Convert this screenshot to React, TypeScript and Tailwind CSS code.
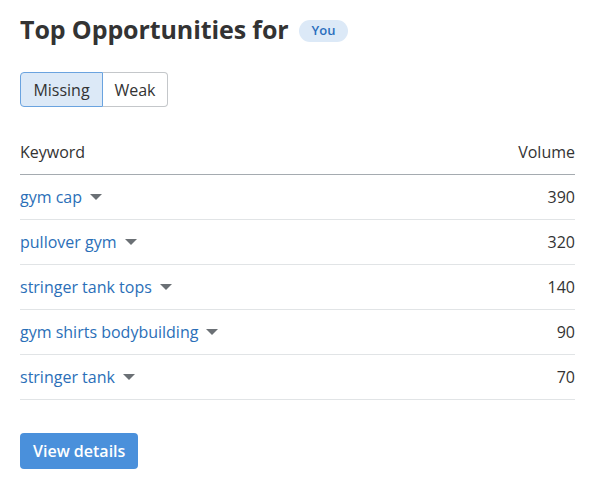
import React from 'react';

const ROWS = [
  { keyword: 'gym cap', volume: 390 },
  { keyword: 'pullover gym', volume: 320 },
  { keyword: 'stringer tank tops', volume: 140 },
  { keyword: 'gym shirts bodybuilding', volume: 90 },
  { keyword: 'stringer tank', volume: 70 },
];

const Caret = () => (
  <svg width="12" height="7" viewBox="0 0 12 7" className="ml-2 shrink-0">
    <path d="M0 0 L12 0 L6 6 Z" fill="#6b7075" />
  </svg>
);

export default function App() {
  return (
    <div
      className="w-[598px] h-[482px] bg-white px-5 pt-[14px] text-[#333]"
      style={{ fontFamily: '"Open Sans", "Noto Sans", sans-serif' }}
    >
      <div className="flex items-center h-[32px]">
        <h1 className="text-[25px] font-bold tracking-[-0.1px] text-[#333]">Top Opportunities for</h1>
        <span className="ml-[10px] mt-[2px] h-[22px] px-[13px] rounded-full bg-[#dce9f7] text-[#2a6ebd] text-[13px] font-semibold flex items-center">
          You
        </span>
      </div>

      <div className="flex mt-[26px] h-[35px] text-[16px]">
        <button className="rounded-l-[4px] border border-[#6aa3df] bg-[#dce9f7] text-[#333] w-[83px]">
          Missing
        </button>
        <button className="rounded-r-[4px] border border-l-0 border-[#c4c7ca] bg-white text-[#333] w-[65px]">
          Weak
        </button>
      </div>

      <div className="mt-[22px] w-[555px]">
        <div className="flex justify-between items-center h-[46px] border-b border-[#a5abb0] text-[16px] text-[#333]">
          <span>Keyword</span>
          <span>Volume</span>
        </div>
        {ROWS.map((row) => (
          <div
            key={row.keyword}
            className="flex justify-between items-center h-[45px] border-b border-[#e1e4e6] text-[16px]"
          >
            <span className="flex items-center text-[#2b6fb8]">
              {row.keyword}
              <Caret />
            </span>
            <span className="text-[#333]">{row.volume}</span>
          </div>
        ))}
      </div>

      <button className="mt-[33px] h-[36px] px-[13px] rounded-[4px] bg-[#4a90db] text-white text-[16px] font-semibold">
        View details
      </button>
    </div>
  );
}
